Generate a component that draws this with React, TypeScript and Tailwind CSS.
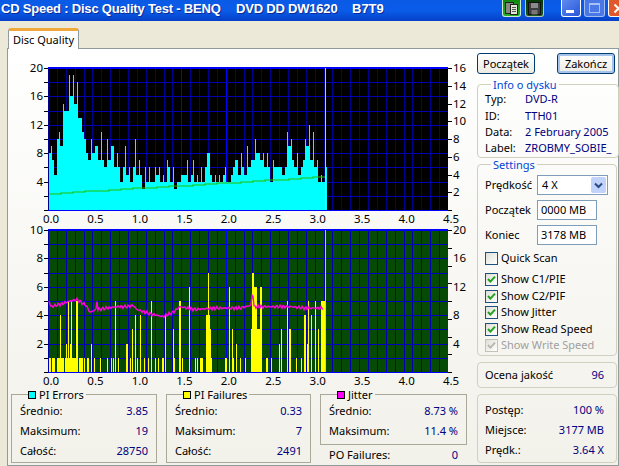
import type { ReactNode } from 'react'

const FONT = 'font-["Noto_Sans","Liberation_Sans",sans-serif]'

// one value per 2px column, read off the graph
const PIE = [
  8, 9, 7, 5, 10, 11, 9, 15, 14, 14, 19, 16, 19, 15, 18, 13, 13, 11, 10, 8, 7, 10, 8, 9, 9, 7, 11, 7, 6, 10, 7, 9, 9, 6, 8, 6,
  4, 6, 9, 5, 6, 4, 6, 10, 5, 7, 5, 3, 6, 4, 6, 4, 4, 6, 5, 6, 4, 5, 4, 7, 6, 4, 6, 3, 4, 4, 5, 5, 5, 7, 4, 5,
  7, 4, 5, 4, 6, 4, 6, 8, 8, 5, 4, 5, 4, 5, 4, 5, 6, 4, 4, 5, 6, 7, 7, 5, 8, 6, 5, 9, 6, 7, 7, 10, 8, 8, 7, 8, 6, 8, 6, 4, 7, 6,
  6, 6, 6, 5, 6, 11, 9, 10, 7, 6, 8, 5, 6, 7, 10, 9, 12, 7, 11, 6, 7, 4, 5, 4, 6,
]

// [x, width, value]
const PIF: [number, number, number][] = [
  [49, 2, 1], [52, 3, 1], [57, 7, 1], [60, 1, 4], [65, 13, 1], [66, 1, 2], [68, 1, 5], [70, 1, 2], [71, 1, 5], [76, 2, 5], [79, 4, 1],
  [84, 1, 1], [87, 2, 1], [91, 1, 2], [94, 1, 1], [100, 1, 1], [107, 1, 1], [111, 1, 1], [113, 1, 1], [115, 1, 5], [118, 1, 1],
  [126, 2, 2], [130, 1, 1], [132, 1, 3], [135, 1, 4], [137, 1, 1], [140, 1, 4], [144, 1, 1], [148, 1, 1], [151, 1, 5], [155, 1, 1],
  [158, 1, 1], [162, 2, 1], [165, 1, 4], [173, 1, 3], [174, 1, 1], [179, 2, 5], [182, 1, 1], [189, 1, 6],
  [195, 1, 1], [197, 1, 1], [200, 3, 1], [206, 4, 4], [208, 1, 7], [210, 1, 3], [211, 1, 1], [225, 2, 1], [229, 1, 6], [232, 1, 3],
  [233, 1, 1], [236, 1, 2], [240, 1, 1], [245, 1, 1], [251, 11, 3], [252, 2, 7], [254, 3, 6], [260, 2, 6], [266, 2, 1], [271, 1, 1],
  [279, 1, 2], [281, 1, 3], [287, 1, 5], [289, 2, 3], [296, 1, 1], [301, 1, 1], [304, 2, 4], [307, 1, 2], [308, 1, 5], [311, 1, 4],
  [315, 1, 5], [318, 1, 3], [321, 2, 5], [323, 2, 5],
]

// [x, value] control points for the jitter trace
const JITTER: [number, number][] = [
  [49, 5], [51, 4.6], [62, 4.8], [70, 5], [77, 5.1], [86, 4.7], [90, 4.2], [96, 4.4], [97, 5], [98, 4.4], [107, 4.5], [117, 4.6], [128, 4.6],
  [133, 4.7], [137, 4.4], [150, 4.1], [163, 3.9], [173, 4.2], [180, 4.6], [195, 4.4], [215, 4.5], [240, 4.5], [251, 4.7], [252.5, 5.8], [254, 4.6],
  [270, 4.6], [290, 4.6], [305, 4.5], [323, 4.5],
]

const X0 = 48
const PW = 400
const PH = 142

function jitterPoints(top: number) {
  const pts: string[] = []
  for (let x = 49; x <= 323; x += 1) {
    const next = JITTER.findIndex(p => p[0] >= x)
    const b = JITTER[Math.max(next, 1)]
    const a = JITTER[Math.max(next, 1) - 1]
    const v = a[1] + ((b[1] - a[1]) * (x - a[0])) / (b[0] - a[0])
    const noise = (Math.sin(x * 1.7) + Math.sin(x * 4.3 + 1)) * 0.9
    pts.push(`${x},${(top + PH - v * 14.2 + noise).toFixed(1)}`)
  }
  return pts.join(' ')
}

function Grid({ top, bright, dim, hot }: { top: number; bright: string; dim: string; hot: string }) {
  return (
    <g shapeRendering="crispEdges">
      {Array.from({ length: 45 }, (_, i) => (
        <line key={i} x1={X0 + 8.89 * i + 0.5} x2={X0 + 8.89 * i + 0.5} y1={top} y2={top + PH} stroke={i === 15 || i === 20 ? bright : dim} />
      ))}
      {Array.from({ length: 11 }, (_, i) => (
        <line key={i} x1={X0} x2={X0 + PW} y1={top + 14.2 * i + 0.5} y2={top + 14.2 * i + 0.5} stroke={hot} />
      ))}
      <line x1={X0} x2={X0 + PW} y1={top} y2={top} stroke="#0000ff" strokeWidth={2} />
      <line x1={X0} x2={X0 + PW} y1={top + PH} y2={top + PH} stroke="#0000ff" />
    </g>
  )
}

function Axis({ top, left, right, leftMax, rightMax }: { top: number; left: number[]; right: number[]; leftMax: number; rightMax: number }) {
  const xl = [0, 0.5, 1, 1.5, 2, 2.5, 3, 3.5, 4, 4.5]
  return (
    <g fontSize={11.5} fill="#000">
      {left.map(v => (
        <text key={v} x={43} y={top + PH - (v / leftMax) * PH + 4} textAnchor="end">{v}</text>
      ))}
      {right.map(v => (
        <text key={v} x={453} y={top + PH - (v / rightMax) * PH + 4}>{v}</text>
      ))}
      {xl.map(v => (
        <text key={v} x={X0 + v * 88.9 + 3} y={top + PH + 12.5} textAnchor="middle">{v.toFixed(1)}</text>
      ))}
      <g shapeRendering="crispEdges" stroke="#000">
        {Array.from({ length: 11 }, (_, i) => (
          <line key={i} x1={44} x2={48} y1={top + 14.2 * i + 0.5} y2={top + 14.2 * i + 0.5} />
        ))}
        {Array.from({ length: 9 }, (_, i) => (
          <line key={i} x1={448} x2={452} y1={top + 17.75 * i + 0.5} y2={top + 17.75 * i + 0.5} />
        ))}
      </g>
    </g>
  )
}

function TopChart() {
  const top = 8
  const u = PH / 20
  const speed: string[] = []
  for (let x = 49; x < 325; x += 12) {
    const v = 2.3 + ((x - 49) / 276) * 2.4
    speed.push(`${x},${(top + PH - v * u).toFixed(0)} ${Math.min(x + 12, 325)},${(top + PH - v * u).toFixed(0)}`)
  }
  return (
    <svg width={470} height={165} className="block overflow-visible">
      <rect x={X0} y={top} width={PW} height={PH} fill="#000" />
      <Grid top={top} bright="#0000ff" dim="#000090" hot="#0000b0" />
      <g fill="#00ffff" shapeRendering="crispEdges">
        <rect x={49} y={top + PH - 3 * u} width={276} height={3 * u} />
        {PIE.map((v, i) => {
          const next = Math.min(v, PIE[i + 1] ?? v)
          return (
            <g key={i}>
              <rect x={49 + i * 2} y={top + PH - v * u} width={1} height={v * u} />
              <rect x={50 + i * 2} y={top + PH - next * u} width={1} height={next * u} />
            </g>
          )
        })}
      </g>
      <polyline points={speed.join(' ')} fill="none" stroke="#21c400" strokeWidth={1.2} />
      <line x1={325.5} x2={325.5} y1={top} y2={top + PH} stroke="#c8c8c8" />
      <Axis top={top} left={[20, 16, 12, 8, 4]} right={[16, 14, 12, 10, 8, 6, 4, 2]} leftMax={20} rightMax={16} />
    </svg>
  )
}

function BottomChart() {
  const top = 5
  return (
    <svg width={470} height={163} className="block overflow-visible">
      <rect x={X0} y={top} width={PW} height={PH} fill="#054a05" />
      <Grid top={top} bright="#0000ff" dim="#0000b0" hot="#0000c0" />
      <g fill="#ffff00" shapeRendering="crispEdges">
        {PIF.map(([x, w, v], i) => (
          <rect key={i} x={x} y={top + PH - v * 14.2} width={w} height={v * 14.2} />
        ))}
      </g>
      <polyline points={jitterPoints(top)} fill="none" stroke="#ff00e0" strokeWidth={1.4} />
      <line x1={325.5} x2={325.5} y1={top} y2={top + PH} stroke="#c8c8c8" />
      <Axis top={top} left={[10, 8, 6, 4, 2]} right={[20, 16, 12, 8, 4]} leftMax={10} rightMax={20} />
    </svg>
  )
}

function Stat({ label, value, className = '' }: { label: string; value: string; className?: string }) {
  return (
    <div className={`flex justify-between items-center ${className}`}>
      <span>{label}</span>
      <span className="text-[#000080]">{value}</span>
    </div>
  )
}

function StatGroup({ color, title, className, children }: { color: string; title: string; className: string; children: ReactNode }) {
  return (
    <fieldset className={`border border-[#aca899] ${className}`}>
      <legend className="ml-[8px] flex items-center gap-[3px] pr-[2px] leading-[13px]">
        <span className={`w-[8px] h-[8px] border border-black ${color}`} />
        {title}
      </legend>
      {children}
    </fieldset>
  )
}

function Check({ label, checked = true, disabled = false, className = '' }: { label: string; checked?: boolean; disabled?: boolean; className?: string }) {
  return (
    <div className={`flex items-center gap-[3px] h-[14px] ${disabled ? 'text-[#a0a0a0]' : ''} ${className}`}>
      <span className={`w-[13px] h-[13px] flex items-center justify-center border bg-gradient-to-br from-[#e0e0d8] to-white ${disabled ? 'border-[#c4c2b4]' : 'border-[#1c5180]'}`}>
        {checked && (
          <svg width={9} height={9} viewBox="0 0 9 9">
            <path d="M1 4 L3.4 6.6 L8 1.6" fill="none" stroke={disabled ? '#b8b8b0' : '#21a121'} strokeWidth={2} />
          </svg>
        )}
      </span>
      {label}
    </div>
  )
}

function Btn({ label, primary = false }: { label: string; primary?: boolean }) {
  return (
    <button className={`w-[58px] h-[21px] rounded-[3px] border border-[#003c74] bg-gradient-to-b from-white to-[#ecebe3] text-[11px] leading-none ${primary ? 'shadow-[inset_0_0_0_2px_#a6c3ec]' : ''}`}>
      {label}
    </button>
  )
}

function InfoRow({ label, value }: { label: string; value: string }) {
  return (
    <div className="flex h-[16.4px] items-center">
      <span className="w-[40px]">{label}</span>
      <span className="text-[#000080] whitespace-nowrap">{value}</span>
    </div>
  )
}

function Field({ label, className, children }: { label: string; className: string; children: ReactNode }) {
  return (
    <div className={`flex items-center ${className}`}>
      <span className="w-[52px]">{label}</span>
      {children}
    </div>
  )
}

function TitleButtons() {
  return (
    <div className="flex items-start shrink-0 h-[17px]">
      <span className="ml-[1px] w-[19px] h-[17px] rounded-b-[3px] border border-white/80 border-t-0 bg-gradient-to-b from-[#0f8a0f] to-[#25b025] flex items-center justify-center">
        <svg width={15} height={15} viewBox="0 0 15 15">
          <rect x={1.5} y={1.5} width={8} height={11} fill="#8a8a80" stroke="#222" />
          <rect x={6.5} y={3.5} width={7} height={10} fill="#e4e4d8" stroke="#222" />
          <path d="M8 6.5h4M8 8.5h4M8 10.5h4" stroke="#555" />
        </svg>
      </span>
      <span className="ml-[4px] w-[19px] h-[17px] rounded-b-[3px] border border-white/70 border-t-0 bg-gradient-to-b from-[#063a06] to-[#1a5a1a] flex items-center justify-center">
        <svg width={15} height={15} viewBox="0 0 15 15">
          <rect x={1.5} y={1.5} width={12} height={12} fill="#3c3c3c" stroke="#111" />
          <rect x={4} y={2} width={7} height={5} fill="#8a8a8a" />
          <rect x={4.5} y={9} width={6} height={4.5} fill="#777" />
        </svg>
      </span>
      <span className="ml-[17px] w-[20px] h-[17px] rounded-b-[3px] border border-white border-t-0 bg-gradient-to-br from-[#5f8bf0] to-[#2a55d8] flex items-end pl-[4px] pb-[3px]">
        <span className="w-[8px] h-[3px] bg-white" />
      </span>
      <span className="ml-[3px] w-[21px] h-[17px] rounded-b-[3px] border border-white/50 border-t-0 bg-[#4a78e6] flex items-center justify-center">
        <span className="w-[11px] h-[10px] border border-[#a9c0f5] border-t-2" />
      </span>
      <span className="ml-[3px] w-[20px] h-[17px] rounded-b-[3px] border border-white border-t-0 bg-[#e0582c] flex items-center justify-center shrink-0">
        <svg width={11} height={11} viewBox="0 0 11 11"><path d="M1.5 1.5 L9.5 9.5 M9.5 1.5 L1.5 9.5" stroke="#fff" strokeWidth={2} /></svg>
      </span>
    </div>
  )
}

export default function App() {
  return (
    <div className={`${FONT} w-[619px] h-[466px] overflow-hidden bg-[#ece9d8] text-[11px] leading-[14px] text-black flex flex-col`}>
      {/* Title bar */}
      <div className="h-[21px] shrink-0 flex items-start bg-gradient-to-b from-[#0a5ae6] via-[#0a5ce8] to-[#0640c8] overflow-hidden">
        <div className="w-[501px] shrink-0 flex text-white font-bold text-[13px] leading-[18px] whitespace-nowrap [text-shadow:1px_1px_#0a2a9a] font-['Liberation_Sans',sans-serif]">
          <span className="ml-[1px] w-[235px] tracking-[-0.2px]">CD Speed : Disc Quality Test - BENQ</span>
          <span className="w-[116px] tracking-[-0.2px]">DVD DD DW1620</span>
          <span>B7T9</span>
        </div>
        <TitleButtons />
      </div>

      {/* Tab strip */}
      <div className="h-[7px] shrink-0" />
      <div className="ml-[8px] w-[71px] h-[21px] shrink-0 -mb-[1px] z-10 rounded-t-[3px] border-x border-[#919b9c] border-t-[3px] border-t-[#f0a83c] bg-white text-center leading-[17px]">
        Disc Quality
      </div>

      {/* Panel */}
      <div className="ml-[7px] flex-1 min-h-0 border border-[#919b9c] bg-gradient-to-b from-white to-[#f2f1ea] flex">
        <div className="w-[468px] shrink-0 flex flex-col">
          <div className="h-[11px]" />
          <div className="-ml-[8px]">
            <TopChart />
            <BottomChart />
          </div>
          <div className="ml-[3px] flex gap-[9px] items-start">
            <StatGroup color="bg-[#00ffff]" title="PI Errors" className="w-[146px] h-[75px] px-[8px]">
              <Stat label="Średnio:" value="3.85" className="h-[20px]" />
              <Stat label="Maksimum:" value="19" className="h-[20px]" />
              <Stat label="Całość:" value="28750" className="h-[19px]" />
            </StatGroup>
            <StatGroup color="bg-[#ffff00]" title="PI Failures" className="w-[145px] h-[75px] px-[8px]">
              <Stat label="Średnio:" value="0.33" className="h-[20px]" />
              <Stat label="Maksimum:" value="7" className="h-[20px]" />
              <Stat label="Całość:" value="2491" className="h-[19px]" />
            </StatGroup>
            <div className="w-[147px] flex flex-col">
              <StatGroup color="bg-[#ff00ff]" title="Jitter" className="h-[57px] px-[8px]">
                <Stat label="Średnio:" value="8.73 %" className="h-[19px]" />
                <Stat label="Maksimum:" value="11.4 %" className="h-[21px]" />
              </StatGroup>
              <Stat label="PO Failures:" value="0" className="h-[20px] px-[9px]" />
            </div>
          </div>
        </div>

        {/* Right column */}
        <div className="ml-[1px] w-[140px] shrink-0 flex flex-col">
          <div className="mt-[4px] h-[21px] flex justify-between pr-[2px]">
            <Btn label="Początek" />
            <Btn label="Zakończ" primary />
          </div>
          <fieldset className="mt-[4px] h-[80px] rounded-[4px] border border-[#d0d0bf] px-[7px]">
            <legend className="ml-[6px] px-[2px] text-[#0046d5] leading-[13px]">Info o dysku</legend>
            <InfoRow label="Typ:" value="DVD-R" />
            <InfoRow label="ID:" value="TTH01" />
            <InfoRow label="Data:" value="2 February 2005" />
            <InfoRow label="Label:" value="ZROBMY_SOBIE_" />
          </fieldset>
          <fieldset className="h-[198px] rounded-[4px] border border-[#d0d0bf] px-[7px]">
            <legend className="ml-[6px] px-[2px] text-[#0046d5] leading-[13px]">Settings</legend>
            <Field label="Prędkość" className="mt-[4px] h-[20px]">
              <span className="w-[71px] h-[20px] border border-[#7f9db9] bg-white flex items-center justify-between pl-[4px] pr-[1px]">
                4 X
                <span className="w-[15px] h-[16px] rounded-[2px] bg-[#c1d3fb] flex items-center justify-center">
                  <svg width={9} height={7} viewBox="0 0 9 7"><path d="M1 1.5 L4.5 5 L8 1.5" fill="none" stroke="#2b4a85" strokeWidth={2} /></svg>
                </span>
              </span>
            </Field>
            <Field label="Początek" className="mt-[5px] h-[20px]">
              <span className="w-[60px] h-[20px] border border-[#7f9db9] bg-white pl-[3px] leading-[17px]">0000 MB</span>
            </Field>
            <Field label="Koniec" className="mt-[5px] h-[20px]">
              <span className="w-[60px] h-[20px] border border-[#7f9db9] bg-white pl-[3px] leading-[17px]">3178 MB</span>
            </Field>
            <Check label="Quick Scan" checked={false} className="mt-[6px]" />
            <Check label="Show C1/PIE" className="mt-[7px]" />
            <Check label="Show C2/PIF" className="mt-[3px]" />
            <Check label="Show Jitter" className="mt-[2px]" />
            <Check label="Show Read Speed" className="mt-[3px]" />
            <Check label="Show Write Speed" disabled className="mt-[2px]" />
          </fieldset>
          <div className="mt-[6px] h-[26px] rounded-[4px] border border-[#d0d0bf] pl-[7px] pr-[12px]">
            <Stat label="Ocena jakość" value="96" className="h-[24px]" />
          </div>
          <div className="mt-[6px] h-[69px] rounded-[4px] border border-[#d0d0bf] pl-[7px] pr-[12px] pt-[5px]">
            <Stat label="Postęp:" value="100 %" className="h-[20px]" />
            <Stat label="Miejsce:" value="3177 MB" className="h-[20px]" />
            <Stat label="Prędk.:" value="3.64 X" className="h-[20px]" />
          </div>
        </div>
      </div>
    </div>
  )
}
